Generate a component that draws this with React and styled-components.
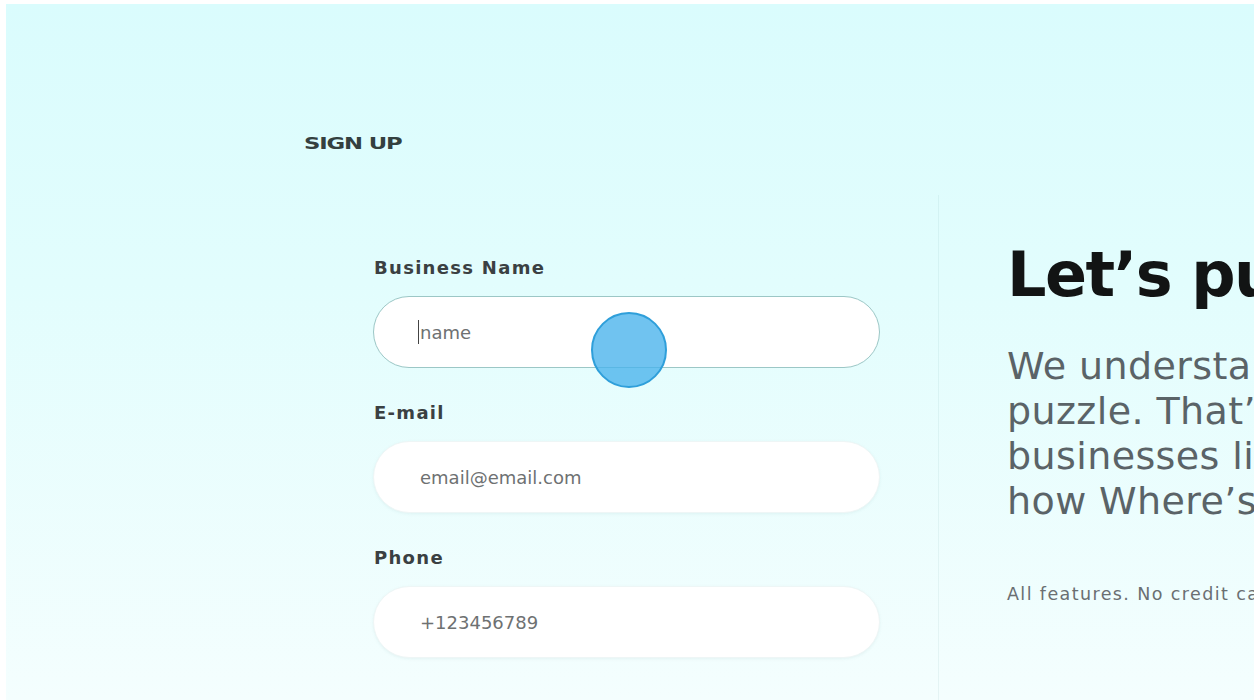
import styled, { createGlobalStyle } from "styled-components";

const GlobalStyle = createGlobalStyle`
  html, body {
    margin: 0;
    padding: 0;
    background: #ffffff;
  }
  body {
    font-family: "DejaVu Sans", "Noto Sans", sans-serif;
  }
`;

const Page = styled.div`
  padding: 4px 1px 0 6px;
  height: 700px;
  box-sizing: border-box;
`;

const Canvas = styled.div`
  height: 696px;
  overflow: hidden;
  background: linear-gradient(180deg, #dafcfd 0%, #e2fdfd 40%, #f4fefe 100%);
  display: flex;
  flex-direction: column;
`;

const Header = styled.div`
  padding: 130px 0 0 298px;
  height: 20px;
`;

// wide display face, squeezed letters
const Title = styled.h1`
  margin: 0;
  font-size: 16px;
  line-height: 20px;
  font-weight: 700;
  letter-spacing: -0.8px;
  color: #33403f;
  text-transform: uppercase;
  transform: scaleX(1.42);
  transform-origin: left center;
`;

const Body = styled.div`
  margin-top: 41px;
  flex: 1;
  display: grid;
  grid-template-columns: 932px 1fr;
`;

const Form = styled.form`
  padding: 61px 0 0 367px;
  display: flex;
  flex-direction: column;
  gap: 33px;
`;

const Field = styled.div`
  width: 507px;
  display: flex;
  flex-direction: column;
  gap: 16px;
`;

const Label = styled.label`
  padding-left: 1px;
  font-size: 18px;
  line-height: 24px;
  font-weight: 700;
  letter-spacing: 1.3px;
  color: #3a4042;
`;

const InputWrap = styled.div`
  position: relative;
`;

const Input = styled.input`
  display: block;
  width: 100%;
  height: 72px;
  box-sizing: border-box;
  border-radius: 36px;
  border: ${(p) => (p.$active ? "1.5px solid #9cc7c6" : "1px solid #eef6f6")};
  background: #ffffff;
  box-shadow: ${(p) => (p.$active ? "none" : "0 1px 3px rgba(120, 170, 170, 0.12)")};
  padding: 0 0 0 46px;
  font-family: "DejaVu Sans", sans-serif;
  font-size: 18px;
  color: #333;
  outline: none;

  &::placeholder {
    color: #6e7172;
  }
`;

const Caret = styled.span`
  position: absolute;
  left: 45px;
  top: 24px;
  width: 1px;
  height: 24px;
  background: #444;
`;

const Touch = styled.span`
  position: absolute;
  left: 218px;
  top: 16px;
  width: 76px;
  height: 76px;
  box-sizing: border-box;
  border-radius: 50%;
  border: 2px solid #2f9fda;
  background: rgba(72, 178, 236, 0.78);
`;

const Side = styled.section`
  border-left: 1px solid rgba(40, 110, 120, 0.07);
  padding: 49px 0 0 68px;
  white-space: nowrap;
`;

const Heading = styled.h2`
  margin: 0;
  font-size: 62px;
  line-height: 62px;
  font-weight: 700;
  letter-spacing: -1.5px;
  color: #121414;
`;

const Lead = styled.p`
  margin: 38px 0 0;
  font-size: 38px;
  line-height: 45px;
  font-weight: 400;
  letter-spacing: 0.4px;
  color: #5a6367;
`;

const Note = styled.p`
  margin: 59px 0 0;
  font-size: 17.5px;
  line-height: 22px;
  letter-spacing: 1.4px;
  color: #6a6f72;
`;

function App() {
  return (
    <>
      <GlobalStyle />
      <Page>
        <Canvas>
          <Header>
            <Title>Sign up</Title>
          </Header>
          <Body>
            <Form onSubmit={(e) => e.preventDefault()}>
              <Field>
                <Label htmlFor="business">Business Name</Label>
                <InputWrap>
                  <Input id="business" placeholder="name" $active />
                  <Caret />
                  <Touch />
                </InputWrap>
              </Field>
              <Field>
                <Label htmlFor="email">E-mail</Label>
                <Input id="email" type="email" placeholder="email@email.com" />
              </Field>
              <Field>
                <Label htmlFor="phone">Phone</Label>
                <Input id="phone" type="tel" placeholder="+123456789" />
              </Field>
            </Form>
            <Side>
              <Heading>Let’s put the pieces together</Heading>
              <Lead>
                We understand marketing can feel like a
                <br />
                puzzle. That’s why we help local
                <br />
                businesses like yours get found. See
                <br />
                how Where’s Local fits the picture.
              </Lead>
              <Note>All features. No credit card required.</Note>
            </Side>
          </Body>
        </Canvas>
      </Page>
    </>
  );
}

export default App;
